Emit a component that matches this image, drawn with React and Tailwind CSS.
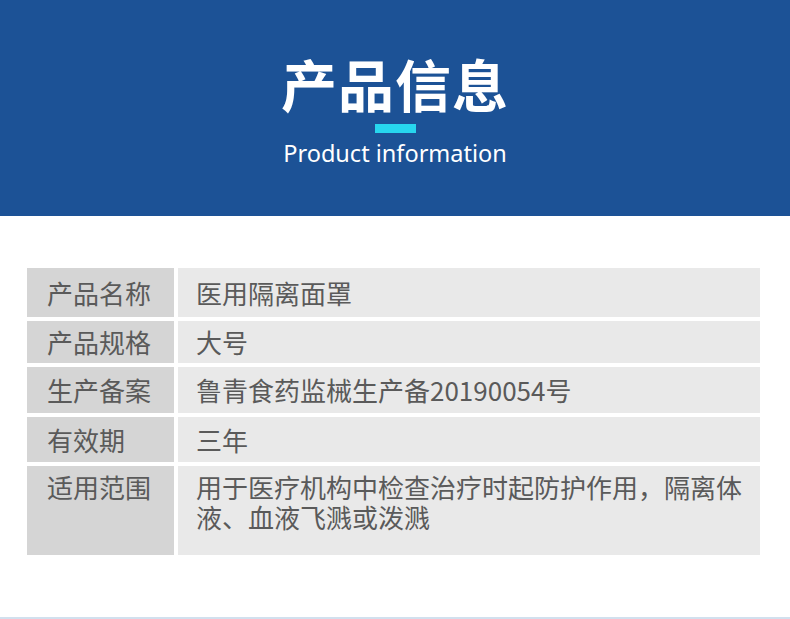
import React from 'react'

const rows = [
  { label: '产品名称', value: '医用隔离面罩', h: 'h-[49px]', pt: 'pt-[10px]' },
  { label: '产品规格', value: '大号', h: 'h-[42px]', pt: 'pt-[6px]' },
  { label: '生产备案', value: '鲁青食药监械生产备20190054号', h: 'h-[46px]', pt: 'pt-[8px]' },
  { label: '有效期', value: '三年', h: 'h-[45px]', pt: 'pt-[8px]' },
  {
    label: '适用范围',
    value: '用于医疗机构中检查治疗时起防护作用，隔离体液、血液飞溅或泼溅',
    h: 'h-[89px]',
    pt: 'pt-[6px]',
  },
]

export default function App() {
  return (
    <div className="w-[790px] h-[619px] bg-white overflow-hidden font-['Noto_Sans_CJK_SC',sans-serif]">
      {/* header */}
      <div className="h-[216px] bg-[#1c5296] flex flex-col items-center pt-[46px]">
        <h1 className="text-white text-[56px] font-bold leading-[74px] tracking-[1px]">产品信息</h1>
        <div className="mt-[4px] w-[41px] h-[9px] bg-[#27d6ee]" />
        <p className="mt-[5px] text-white text-[23.5px] leading-[30px] font-['Noto_Sans',sans-serif]">
          Product information
        </p>
      </div>

      {/* table */}
      <div className="mt-[52px] mx-[27px] w-[733px] flex flex-col gap-[4px]">
        {rows.map((r) => (
          <div key={r.label} className={`flex gap-[4px] ${r.h}`}>
            <div className={`w-[147px] shrink-0 bg-[#d5d5d5] pl-[20px] ${r.pt} text-[26px] leading-[30px] text-[#5a5a5a]`}>
              {r.label}
            </div>
            <div className={`flex-1 bg-[#e9e9e9] pl-[18px] pr-[8px] ${r.pt} text-[26px] leading-[30px] text-[#5a5a5a]`}>
              {r.value}
            </div>
          </div>
        ))}
      </div>

      <div className="mt-[62px] h-[2px] bg-[#d2e0ee]" />
    </div>
  )
}
